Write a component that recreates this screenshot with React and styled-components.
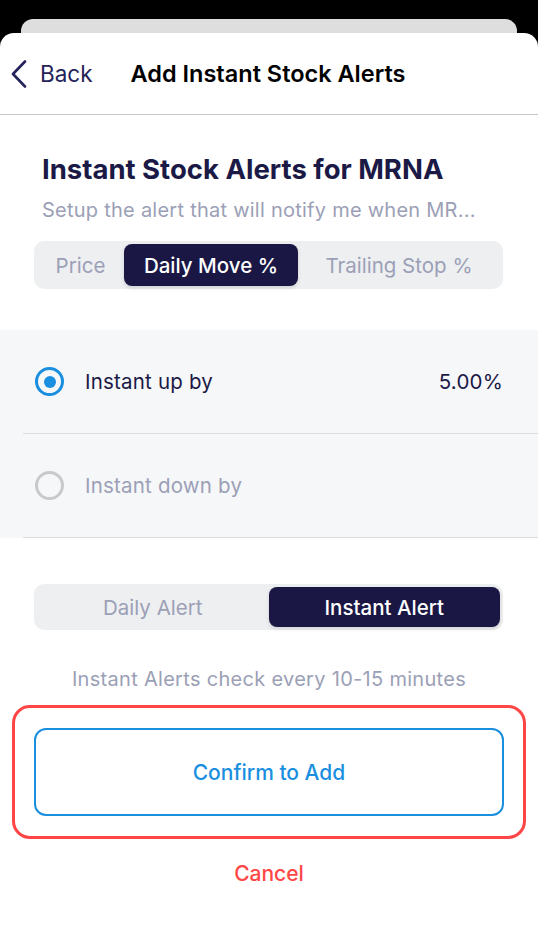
import styled, { createGlobalStyle } from "styled-components";

const GlobalStyle = createGlobalStyle`
  html, body {
    margin: 0;
    padding: 0;
    background: #000;
  }

  body {
    font-family: Inter, "Noto Sans", sans-serif;
    -webkit-font-smoothing: antialiased;
  }
`;

const NAVY = "#1b1946";
const GREY_TEXT = "#9ba0b6";
const BLUE = "#1a8fe0";
const RED = "#ff4646";

const Screen = styled.div`
  display: flex;
  flex-direction: column;
  width: 538px;
  min-height: 937px;
  padding-top: 19px;
  box-sizing: border-box;
`;

const BackSheet = styled.div`
  height: 14px;
  margin: 0 21px;
  border-radius: 12px 12px 0 0;
  background: #dedede;
`;

const Sheet = styled.div`
  flex: 1;
  display: flex;
  flex-direction: column;
  background: #fff;
  border-radius: 14px 14px 0 0;
`;

const Header = styled.div`
  display: flex;
  align-items: center;
  height: 81px;
  padding-left: 11px;
  border-bottom: 1px solid #c6c6c8;
  color: ${NAVY};

  .back {
    display: flex;
    align-items: center;
    gap: 13px;
    font-size: 22.5px;
    color: #24235a;
    margin-right: 38px;
  }

  h1 {
    margin: 0;
    font-size: 23.5px;
    font-weight: 600;
    color: #000;
  }
`;

const Content = styled.div`
  display: flex;
  flex-direction: column;
  padding: 0 35px 0 34px;
`;

const Title = styled.h2`
  margin: 39px 0 0 8px;
  font-size: 27.5px;
  line-height: 30px;
  font-weight: 700;
  color: ${NAVY};
  white-space: nowrap;
`;

const Subtitle = styled.p`
  margin: 14px 0 0 8px;
  font-size: 20px;
  line-height: 24px;
  letter-spacing: 0.25px;
  color: ${GREY_TEXT};
  white-space: nowrap;
`;

const Segmented = styled.div`
  display: flex;
  height: ${(p) => p.$height}px;
  margin-top: ${(p) => p.$top}px;
  padding: 3px;
  box-sizing: border-box;
  border-radius: 10px;
  background: #eeeff1;
`;

const Segment = styled.div`
  flex: ${(p) => (p.$w ? `0 0 ${p.$w}px` : "1 1 0")};
  display: flex;
  align-items: center;
  justify-content: center;
  border-radius: 8px;
  font-size: 20.5px;
  font-weight: ${(p) => (p.$active ? 500 : 400)};
  color: ${(p) => (p.$active ? "#fff" : GREY_TEXT)};
  background: ${(p) => (p.$active ? "#1a1745" : "transparent")};
  box-shadow: ${(p) => (p.$active ? "0 2px 4px rgba(0,0,0,0.12)" : "none")};
  white-space: nowrap;
`;

const Options = styled.div`
  display: flex;
  flex-direction: column;
  margin-top: 41px;
  background: #f6f7f9;
`;

const OptionRow = styled.div`
  display: flex;
  align-items: center;
  height: 103px;
  margin-left: 23px;
  padding: 0 35px 0 12px;
  border-bottom: 1px solid #dcdde0;
  font-size: 20.5px;
  font-weight: 400;
  letter-spacing: 0.2px;
  color: ${(p) => (p.$active ? NAVY : GREY_TEXT)};

  .label {
    flex: 1;
    margin-left: 21px;
  }
`;

const Radio = styled.span`
  position: relative;
  width: 29px;
  height: 29px;
  box-sizing: border-box;
  border-radius: 50%;
  border: 3px solid ${(p) => (p.$on ? BLUE : "#c9c9c9")};

  &::after {
    content: "";
    display: ${(p) => (p.$on ? "block" : "none")};
    position: absolute;
    inset: 5.5px;
    border-radius: 50%;
    background: ${BLUE};
  }
`;

const Caption = styled.p`
  margin: 37px 0 0;
  text-align: center;
  font-size: 20px;
  line-height: 24px;
  letter-spacing: 0.3px;
  color: ${GREY_TEXT};
`;

const Highlight = styled.div`
  margin: 14px 12px 0;
  padding: 20px 19px;
  border: 3px solid ${RED};
  border-radius: 18px;
`;

const ConfirmButton = styled.button`
  display: flex;
  align-items: center;
  justify-content: center;
  width: 100%;
  height: 88px;
  border: 2px solid ${BLUE};
  border-radius: 12px;
  background: #fff;
  font-family: inherit;
  font-size: 21px;
  font-weight: 500;
  color: ${BLUE};
`;

const Cancel = styled.div`
  margin-top: 23px;
  text-align: center;
  font-size: 21px;
  line-height: 24px;
  font-weight: 500;
  color: ${RED};
`;

const Chevron = () => (
  <svg width="16" height="28" viewBox="0 0 16 28" fill="none">
    <polyline
      points="14,1.5 2,14 14,26.5"
      stroke="#24235a"
      strokeWidth="2.6"
      strokeLinecap="round"
      strokeLinejoin="round"
    />
  </svg>
);

const App = () => {
  return (
    <Screen>
      <GlobalStyle />
      <BackSheet />
      <Sheet>
        <Header>
          <div className="back">
            <Chevron />
            <span>Back</span>
          </div>
          <h1>Add Instant Stock Alerts</h1>
        </Header>

        <Content>
          <Title>Instant Stock Alerts for MRNA</Title>
          <Subtitle>Setup the alert that will notify me when MR...</Subtitle>
          <Segmented $height={48} $top={19}>
            <Segment $w={87}>Price</Segment>
            <Segment $w={174} $active>Daily Move %</Segment>
            <Segment $w={202}>Trailing Stop %</Segment>
          </Segmented>
        </Content>

        <Options>
          <OptionRow $active>
            <Radio $on />
            <span className="label">Instant up by</span>
            <span>5.00%</span>
          </OptionRow>
          <OptionRow>
            <Radio />
            <span className="label">Instant down by</span>
          </OptionRow>
        </Options>

        <Content>
          <Segmented $height={46} $top={46}>
            <Segment>Daily Alert</Segment>
            <Segment $active>Instant Alert</Segment>
          </Segmented>
        </Content>

        <Caption>Instant Alerts check every 10-15 minutes</Caption>

        <Highlight>
          <ConfirmButton>Confirm to Add</ConfirmButton>
        </Highlight>

        <Cancel>Cancel</Cancel>
      </Sheet>
    </Screen>
  );
};

export default App;
